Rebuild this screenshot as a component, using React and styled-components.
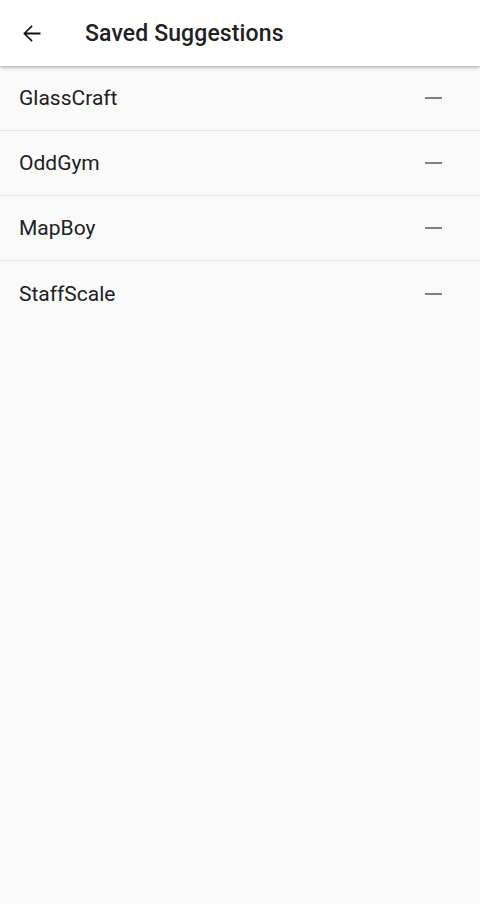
import React from "react";
import styled, { createGlobalStyle } from "styled-components";

const Global = createGlobalStyle`
  html, body { margin: 0; padding: 0; background: #fafafa; }
  body { font-family: Roboto, "Noto Sans", sans-serif; }
`;

const Page = styled.div`
  width: 480px;
  min-height: 904px;
  background: #fafafa;
`;

const AppBar = styled.header`
  height: 66px;
  background: #ffffff;
  display: flex;
  align-items: center;
  box-shadow: 0 2px 4px rgba(0,0,0,0.2), 0 1px 2px rgba(0,0,0,0.12);
  position: relative;
  z-index: 1;
`;

const BackButton = styled.button`
  width: 64px;
  height: 66px;
  border: 0;
  background: transparent;
  padding: 0 0 0 18px;
  display: flex;
  align-items: center;
  color: #000;
`;

const Title = styled.h1`
  margin: 0 0 0 21px;
  font-size: 23px;
  font-weight: 500;
  letter-spacing: 0.12px;
  color: #212121;
`;

const List = styled.ul`
  list-style: none;
  margin: 0;
  padding: 0;
`;

const Row = styled.li`
  height: 65px;
  display: flex;
  align-items: center;
  justify-content: space-between;
  padding: 0 38px 0 19px;
  box-sizing: border-box;
  border-bottom: ${p => (p.$last ? "none" : "1px solid #e6e6e6")};
`;

const Name = styled.span`
  font-size: 21px;
  color: #212121;
`;

const Minus = styled.span`
  width: 17px;
  height: 2px;
  background: #808080;
  display: block;
`;

const items = ["GlassCraft", "OddGym", "MapBoy", "StaffScale"];

export default function App() {
  return (
    <Page>
      <Global />
      <AppBar>
        <BackButton aria-label="Back">
          <svg width="27" height="27" viewBox="0 0 24 24">
            <path d="M20 11.2H7.5l5.5-5.5L12 4.6 4.6 12l7.4 7.4 1-1.1-5.5-5.5H20z" fill="#111" />
          </svg>
        </BackButton>
        <Title>Saved Suggestions</Title>
      </AppBar>
      <List>
        {items.map((it, i) => (
          <Row key={it} $last={i === items.length - 1}>
            <Name>{it}</Name>
            <Minus />
          </Row>
        ))}
      </List>
    </Page>
  );
}
